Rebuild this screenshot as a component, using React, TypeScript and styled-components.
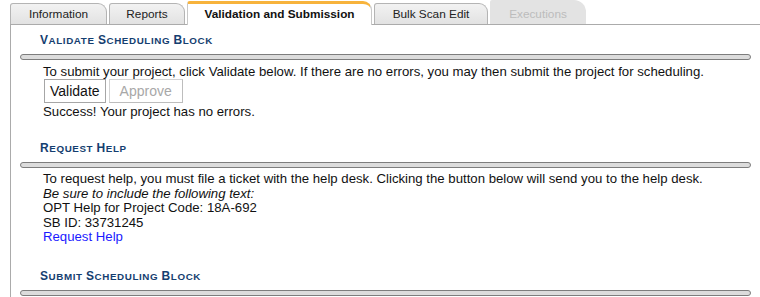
import styled, { createGlobalStyle } from "styled-components";

const GlobalStyle = createGlobalStyle`
  html, body {
    margin: 0;
    padding: 0;
    background: #ffffff;
  }
  body {
    font-family: "Liberation Sans", Arial, sans-serif;
    color: #111;
    overflow: hidden;
  }
`;

const Page = styled.div`
  width: 760px;
  height: 297px;
  padding-left: 10px;
  box-sizing: border-box;
`;

const TabBar = styled.div`
  display: flex;
  align-items: flex-end;
  gap: 2px;
  height: 24px;
  border-bottom: 1px solid #ababab;
  box-sizing: content-box;
`;

const Tab = styled.div<{ $w: number; $active?: boolean; $disabled?: boolean }>`
  display: flex;
  align-items: center;
  justify-content: center;
  box-sizing: border-box;
  width: ${(p) => p.$w}px;
  font-size: 11.8px;
  white-space: nowrap;
  cursor: default;
  border: 1px solid #b4b4b4;
  border-bottom: none;
  border-radius: 3px 9px 0 0;
  height: 21px;
  color: #222;
  background: linear-gradient(#f2f2f2, #e2e2e2);

  ${(p) =>
    p.$active &&
    `
    height: 24px;
    margin-bottom: -1px;
    border-top: 3px solid #f7b33c;
    border-color: #f7b33c #c8c8c8 #fff #c8c8c8;
    background: #ffffff;
    font-weight: bold;
    color: #111;
    padding-bottom: 1px;
  `}

  ${(p) =>
    p.$disabled &&
    `
    height: 24px;
    padding-top: 3px;
    border: none;
    border-radius: 2px 12px 0 0;
    background: #e3e3e3;
    color: #bcbcbc;
  `}
`;

const Panel = styled.div`
  border-left: 1px solid #ababab;
  height: 272px;
  padding-right: 9px;
`;

const Section = styled.section<{ $gap: number }>`
  padding-top: ${(p) => p.$gap}px;
`;

const Heading = styled.h2`
  margin: 0 0 0 29px;
  font-size: 9.8px;
  line-height: 15px;
  font-weight: bold;
  text-transform: uppercase;
  letter-spacing: 0.6px;
  color: #143e70;
`;

const Initial = styled.span`
  font-size: 12px;
`;

const Rule = styled.div`
  margin: 6px 0 0 9px;
  height: 4px;
  border: 1px solid #7d7d7d;
  border-radius: 3px;
  background: #dcdcdc;
`;

const Body = styled.div<{ $lh?: number }>`
  padding: 4px 0 0 32px;
  font-size: 13.2px;
  line-height: ${(p) => p.$lh ?? 15}px;
`;

const Line = styled.div<{ $italic?: boolean }>`
  font-style: ${(p) => (p.$italic ? "italic" : "normal")};
`;

const ButtonRow = styled.div`
  display: flex;
  gap: 3px;
  margin: 0 0 0 1px;
`;

const Button = styled.button<{ $disabled?: boolean }>`
  height: 24px;
  background: #ffffff;
  font-family: "Liberation Sans", Arial, sans-serif;
  font-size: 14px;
  color: ${(p) => (p.$disabled ? "#a8a8a8" : "#111")};
  border: 1px solid ${(p) => (p.$disabled ? "#d4d4d4" : "#a6a6a6")};
  border-right-color: ${(p) => (p.$disabled ? "#bdbdbd" : "#a6a6a6")};
  border-bottom-color: ${(p) => (p.$disabled ? "#bdbdbd" : "#a6a6a6")};
  border-radius: 0;
  padding: ${(p) => (p.$disabled ? "0 10px" : "0 5px")};
`;

const Note = styled.div`
  margin-top: 1px;
  font-size: 13.2px;
  line-height: 15px;
`;

const HelpLink = styled.a`
  color: #1a1aff;
  text-decoration: none;
`;

function SmallCaps({ text }: { text: string }) {
  return (
    <Heading>
      {text.split(" ").map((w, i) => (
        <span key={i}>
          {i > 0 && " "}
          <Initial>{w[0]}</Initial>
          {w.slice(1)}
        </span>
      ))}
    </Heading>
  );
}

export default function App() {
  return (
    <>
      <GlobalStyle />
      <Page>
        <TabBar>
          <Tab $w={97}>Information</Tab>
          <Tab $w={76}>Reports</Tab>
          <Tab $w={185} $active>
            Validation and Submission
          </Tab>
          <Tab $w={114}>Bulk Scan Edit</Tab>
          <Tab $w={96} $disabled>
            Executions
          </Tab>
        </TabBar>
        <Panel>
          <Section $gap={8}>
            <SmallCaps text="Validate Scheduling Block" />
            <Rule />
            <Body>
              <Line>
                To submit your project, click Validate below. If there are no errors, you may then submit the
                project for scheduling.
              </Line>
              <ButtonRow>
                <Button>Validate</Button>
                <Button $disabled disabled>
                  Approve
                </Button>
              </ButtonRow>
              <Note>Success! Your project has no errors.</Note>
            </Body>
          </Section>
          <Section $gap={22}>
            <SmallCaps text="Request Help" />
            <Rule />
            <Body $lh={14.5}>
              <Line>
                To request help, you must file a ticket with the help desk. Clicking the button below will send
                you to the help desk.
              </Line>
              <Line $italic>Be sure to include the following text:</Line>
              <Line>OPT Help for Project Code: 18A-692</Line>
              <Line>SB ID: 33731245</Line>
              <Line>
                <HelpLink href="#">Request Help</HelpLink>
              </Line>
            </Body>
          </Section>
          <Section $gap={24}>
            <SmallCaps text="Submit Scheduling Block" />
            <Rule />
          </Section>
        </Panel>
      </Page>
    </>
  );
}
